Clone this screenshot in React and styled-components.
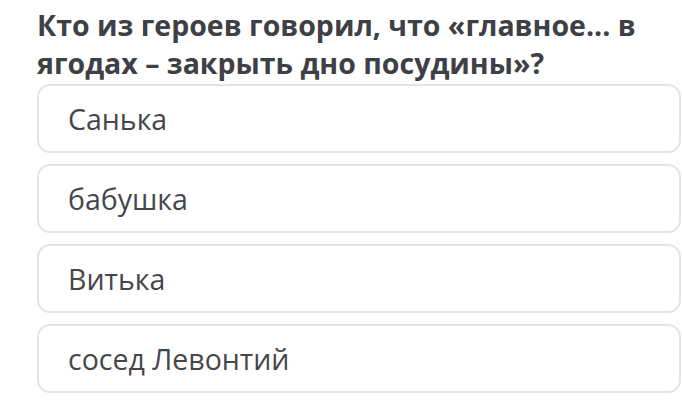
import styled, { createGlobalStyle } from 'styled-components'

const Global = createGlobalStyle`
  html, body {
    margin: 0;
    background: #ffffff;
  }
  body {
    font-family: "Open Sans", "Noto Sans", sans-serif;
  }
`

const Page = styled.div`
  padding: 6px 1px 0 37px;
  width: 682px;
  height: 413px;
  box-sizing: border-box;
  overflow: hidden;
`

const Question = styled.h1`
  margin: 0;
  max-width: 620px;
  font-size: 28.5px;
  font-weight: 700;
  line-height: 38px;
  color: #3d4045;
`

const Options = styled.div`
  display: flex;
  flex-direction: column;
  gap: 11px;
  margin-top: 2px;
`

const Option = styled.div`
  display: flex;
  align-items: center;
  height: 69px;
  box-sizing: border-box;
  padding-left: 29px;
  border: 2px solid #e4e4e4;
  border-radius: 13px;
  font-size: 28.5px;
  color: #45474b;
`

const answers = ['Санька', 'бабушка', 'Витька', 'сосед Левонтий']

function App () {
  return (
    <Page>
      <Global />
      <Question>Кто из героев говорил, что «главное... в ягодах – закрыть дно посудины»?</Question>
      <Options>
        { answers.map((a) => (
          <Option key={ a }>{ a }</Option>
        )) }
      </Options>
    </Page>
  )
}

export default App
